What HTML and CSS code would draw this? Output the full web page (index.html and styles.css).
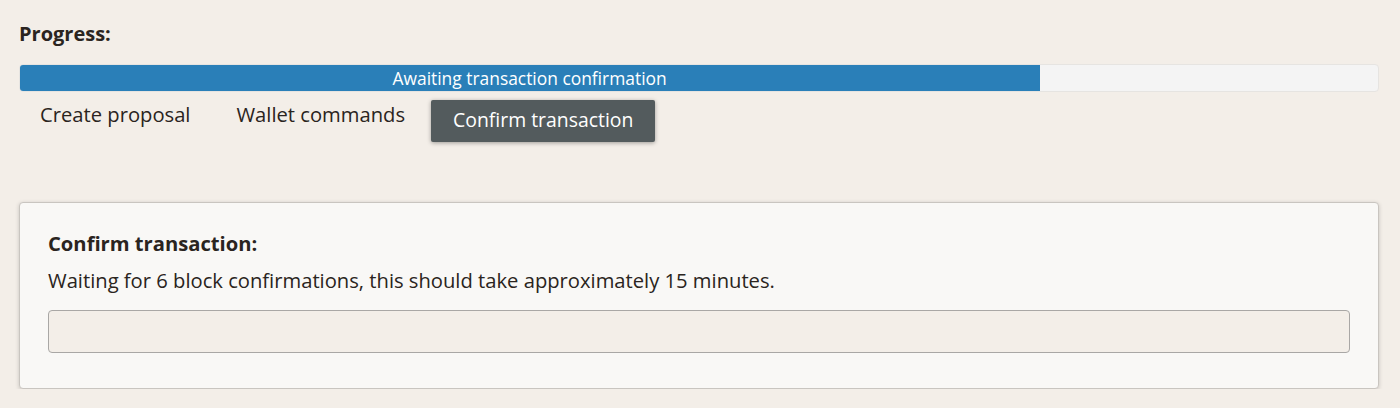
FILE: index.html
```html
<!DOCTYPE html>
<html>
<head>
<meta charset="utf-8">
<link rel="stylesheet" href="styles.css">
</head>
<body>
<div class="page">
  <h3 class="label">Progress:</h3>
  <div class="progress">
    <div class="progress-fill" style="width: 75.2%">Awaiting transaction confirmation</div>
  </div>
  <div class="steps">
    <span class="step">Create proposal</span>
    <span class="step">Wallet commands</span>
    <span class="step active">Confirm transaction</span>
  </div>
  <div class="card">
    <h4 class="card-title">Confirm transaction:</h4>
    <p class="card-text">Waiting for 6 block confirmations, this should take approximately 15 minutes.</p>
    <div class="input-box"></div>
  </div>
</div>
</body>
</html>
```
FILE: styles.css
```css
html, body {
  margin: 0;
  padding: 0;
  background: #f3eee8;
}
body {
  font-family: "Open Sans", "Liberation Sans", sans-serif;
  color: #222;
}
.page {
  padding: 20px 21px 0 19px;
}
.label {
  margin: 0;
  font-size: 20px;
  font-weight: 700;
  line-height: 28px;
  color: #2a2420;
}
.progress {
  margin-top: 16px;
  height: 28px;
  background: #f4f4f4;
  border: 1px solid #e6e4e1;
  border-radius: 4px;
  box-sizing: border-box;
  overflow: hidden;
  display: flex;
}
.progress-fill {
  background: #2a7fb8;
  border-top: 1px solid #1c679c;
  border-bottom: 1px solid #1c679c;
  margin: -1px 0 -1px -1px;
  color: #fff;
  font-size: 17.4px;
  line-height: 26px;
  text-align: center;
  white-space: nowrap;
}
.steps {
  display: flex;
  align-items: flex-start;
  margin-top: 8px;
  padding-left: 21px;
}
.step {
  font-size: 20.2px;
  line-height: 28px;
  color: #2a2420;
  margin-right: 46px;
}
.step.active {
  margin-left: -20px;
  margin-right: 0;
  font-size: 19.4px;
  line-height: 28px;
  background: #535b5d;
  color: #fff;
  padding: 6px 22px 8px 22px;
  border-radius: 2px;
  box-shadow: 0 1px 4px rgba(0,0,0,0.35);
}
.card {
  margin-top: 60px;
  background: #f9f8f6;
  border: 1px solid #c9c5c0;
  border-radius: 4px;
  box-shadow: 0 1px 4px rgba(0,0,0,0.18);
  padding: 25px 28px 35px 28px;
}
.card-title {
  margin: 0;
  font-size: 20.2px;
  font-weight: 700;
  line-height: 30px;
  color: #2a2420;
}
.card-text {
  margin: 7px 0 0 0;
  font-size: 20.2px;
  line-height: 30px;
  color: #2a2420;
}
.input-box {
  margin-top: 15px;
  height: 43px;
  box-sizing: border-box;
  background: #f3eee8;
  border: 1px solid #a9a7a5;
  border-radius: 4px;
}
```
